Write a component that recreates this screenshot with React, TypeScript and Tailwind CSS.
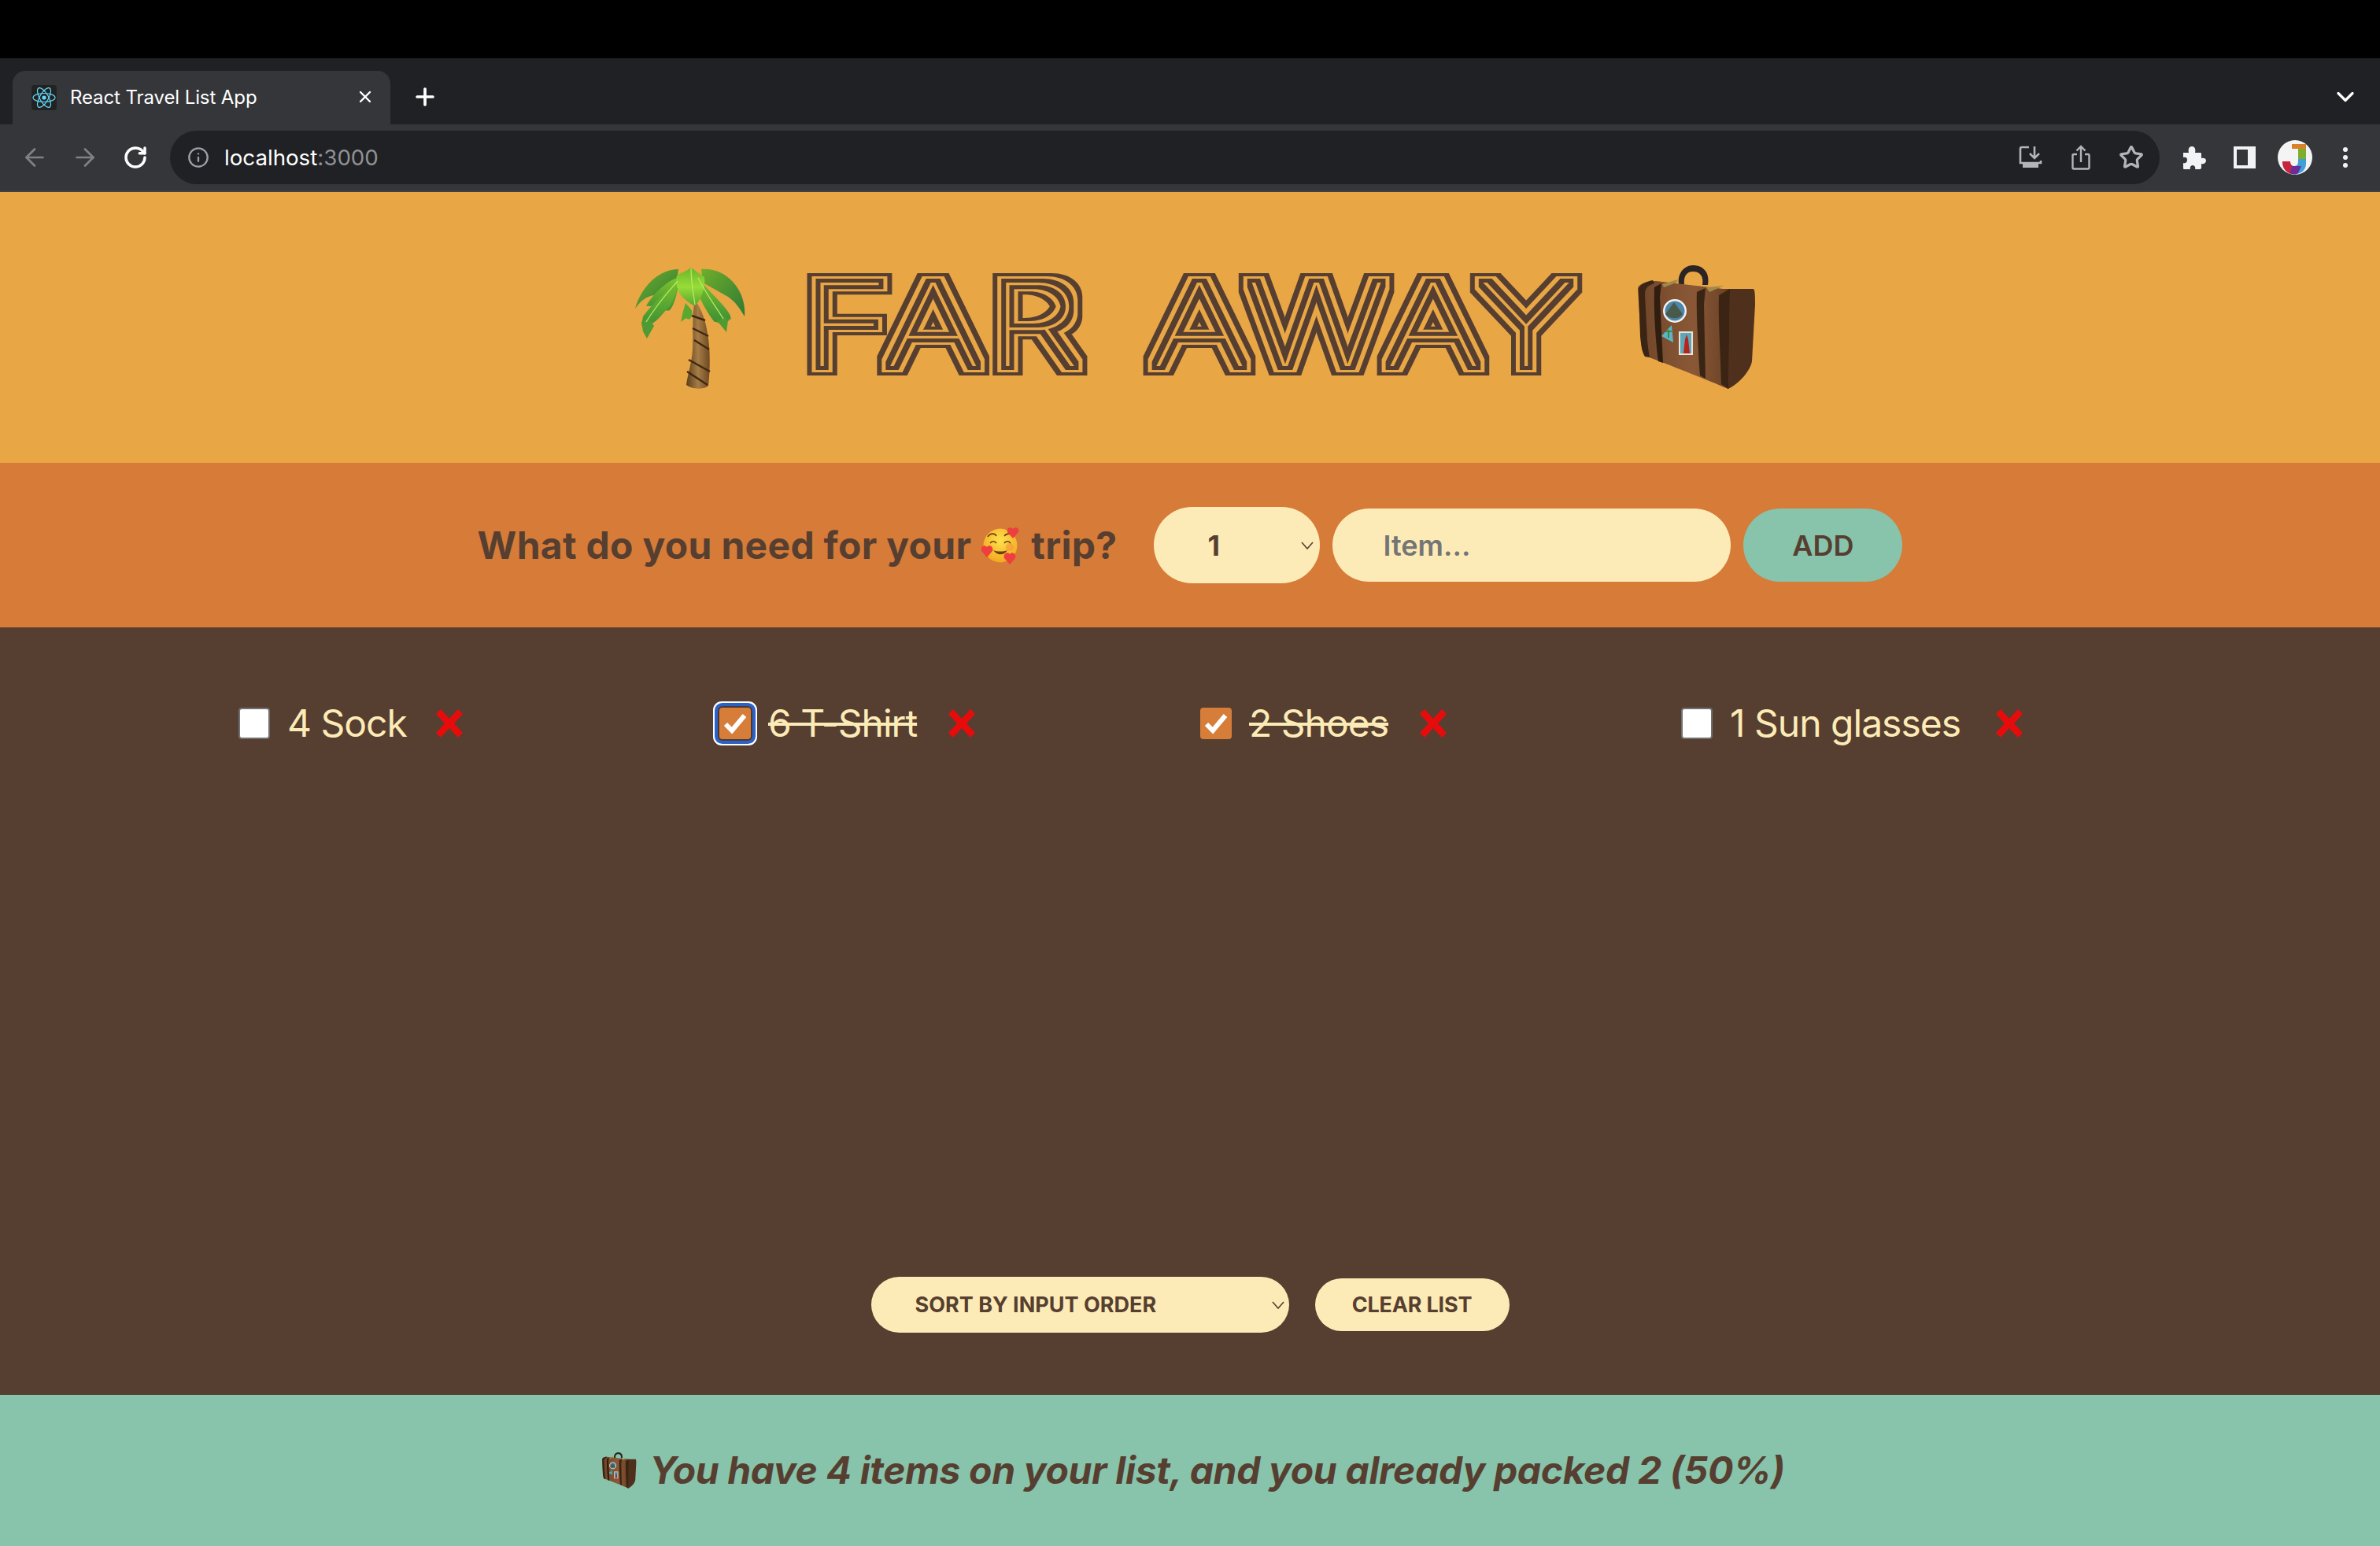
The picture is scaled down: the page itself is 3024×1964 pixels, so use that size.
import { ArrowLeft, ArrowRight, RotateCw, Info, Plus, X, ChevronDown, Star } from "lucide-react";

function Palm({ className }: { className: string }) {
  return (
    <svg viewBox="0 0 141 155" className={className}>
      <defs>
        <linearGradient id="trunk" x1="0" x2="1" y1="0" y2="0">
          <stop offset="0" stopColor="#5c3d1c" />
          <stop offset="0.5" stopColor="#a67c46" />
          <stop offset="1" stopColor="#6d4a22" />
        </linearGradient>
        <linearGradient id="leafDark" x1="0" x2="1" y1="0" y2="1">
          <stop offset="0" stopColor="#6fae2c" />
          <stop offset="1" stopColor="#2f7a35" />
        </linearGradient>
        <linearGradient id="leafMid" x1="0" x2="0" y1="0" y2="1">
          <stop offset="0" stopColor="#7cc42c" />
          <stop offset="1" stopColor="#3f8f35" />
        </linearGradient>
        <linearGradient id="leafLight" x1="0" x2="0" y1="0" y2="1">
          <stop offset="0" stopColor="#6db52a" />
          <stop offset="0.5" stopColor="#97dc38" />
          <stop offset="1" stopColor="#58a52f" />
        </linearGradient>
      </defs>
      <path d="M76 42C72 60 74 90 73 105C72 122 66 140 65 150C72 156 88 156 93 151C95 135 96 105 92 85C90 70 85 55 76 42Z" fill="url(#trunk)" />
      <path d="M72 62L89 68M73 78L93 88M75 93L94 105M68 118L95 133M66 133L92 150" stroke="#3f2810" strokeWidth="2.4" fill="none" />
      <path d="M55 3C30 3 8 25 0 53C8 42 14 38 24 36L52 22Z" fill="url(#leafDark)" />
      <path d="M84 3C116 0 142 30 139 63C133 53 128 45 118 38L86 20Z" fill="url(#leafDark)" />
      <path d="M50 15C36 22 20 38 14 50C26 48 38 58 44 55C52 46 54 28 56 16Z" fill="url(#leafMid)" />
      <path d="M54 16C42 30 22 46 10 63C8 72 9 80 8 70C22 80 30 64 44 50C50 40 53 28 54 16Z" fill="url(#leafMid)" />
      <path d="M8 70L16 63L24 75L15 91L10 82Z" fill="#4e9a33" />
      <path d="M58 70C60 60 62 52 64 46L72 55C74 62 70 70 65 65Z" fill="#5ba831" />
      <path d="M80 14C92 30 116 50 121 62C122 68 122 68 120 66C118 72 112 70 105 70L101 70C94 62 82 42 78 28Z" fill="url(#leafMid)" />
      <path d="M103 70L114 62L118 68L116 83L107 72Z" fill="#4e9a33" />
      <path d="M71 1C62 8 52 8 52 15C52 30 58 40 76 50C84 42 90 24 88 13C82 8 76 5 71 1Z" fill="url(#leafLight)" />
      <path d="M71 2C71 18 74 34 76 48M54 18C44 30 30 44 14 70M80 14C90 34 102 50 112 66" stroke="#b8ec6a" strokeWidth="1.2" fill="none" />
    </svg>
  );
}

function Luggage({ className }: { className: string }) {
  return (
    <svg viewBox="0 0 150 158" className={className}>
      <defs>
        <linearGradient id="lugFront" x1="0" x2="1" y1="0" y2="0">
          <stop offset="0" stopColor="#6f4529" />
          <stop offset="0.6" stopColor="#8a5836" />
          <stop offset="1" stopColor="#6a4126" />
        </linearGradient>
      </defs>
      <path d="M53 24C51 8 62 0 71 0C83 0 93 8 90 25L83 25C85 14 80 8 71 8C63 8 59 14 60 24Z" fill="#2c2423" />
      <path d="M101 30L118 30L148 30C150 32 150 40 150 50L146 122C144 134 130 150 116 157C108 152 103 150 101 148Z" fill="#4f301d" />
      <path d="M1 30C1 24 12 20 24 20L118 31L116 157C90 146 50 130 18 118C8 114 6 110 5 95Z" fill="url(#lugFront)" />
      <path d="M2 32C2 25 10 21 20 19L22 23C12 26 10 30 10 38L13 95C14 105 15 112 16 117L10 116C6 110 5 100 4 90Z" fill="#3a2413" />
      <path d="M22 28L31 23L29 40L33 124L27 122C24 100 21 60 22 28Z" fill="#2f1d10" />
      <path d="M76 34L87 29L85 50L87 144L80 140C78 110 75 60 76 34Z" fill="#3a2414" />
      <path d="M104 38L118 30L116 157L107 151C106 110 103 70 104 38Z" fill="#3b2413" />
      <path d="M32 24L52 18L50 22L34 28ZM88 28L110 26L92 34Z" fill="#a08a4a" />
      <circle cx="48" cy="58" r="15" fill="#f2f2f2" />
      <circle cx="48" cy="58" r="12.5" fill="#4c86a8" />
      <path d="M36 62L47 47L58 62C54 69 42 69 36 62Z" fill="#4a5a4a" />
      <path d="M44 76L31 90L46 98Z" fill="#5bb5c8" />
      <path d="M40 82L40 92M36 84L44 84" stroke="#3d8a3a" strokeWidth="2" fill="none" />
      <rect x="53" y="84" width="18" height="30" fill="#e8e4d8" />
      <rect x="55" y="86" width="14" height="26" fill="#5fa6b8" />
      <path d="M59 112L61 94L63 88L65 94L67 112Z" fill="#b5231c" />
    </svg>
  );
}

function FaceHearts({ className }: { className: string }) {
  return (
    <svg viewBox="0 0 50 48" className={className}>
      <defs>
        <radialGradient id="face" cx="0.5" cy="0.35" r="0.7">
          <stop offset="0" stopColor="#ffe14d" />
          <stop offset="1" stopColor="#f2a31b" />
        </radialGradient>
      </defs>
      <circle cx="24" cy="24" r="21.5" fill="url(#face)" />
      <circle cx="36" cy="26" r="5" fill="#f58a3c" opacity="0.5" />
      <path d="M8 13C11 8 17 8 19 12M29 12C32 8 38 8 40 13M11 21C13 18 17 18 19 21M29 21C31 18 35 18 37 21" stroke="#6b3f12" strokeWidth="1.6" fill="none" />
      <path d="M15 30C20 37 29 37 33 30C28 32 20 32 15 30Z" fill="#6b3f12" />
      <path d="M40 15L33 7C31 2 37 -1 40 3C43 -1 49 2 47 7Z" fill="#ee3e3e" />
      <path d="M7 39L0 31C-2 26 4 22 7 26C10 22 16 26 14 31Z" fill="#ee3e3e" />
      <path d="M36 48L29 40C27 35 33 31 36 35C39 31 45 35 43 40Z" fill="#ee3e3e" />
    </svg>
  );
}

function Cross() {
  return (
    <svg viewBox="0 0 36 36" className="w-[36px] h-[36px] shrink-0">
      <path d="M7 0L18 12L29 0L35 6L24 18L35 30L29 36L18 24L7 36L1 30L12 18L1 6Z" fill="#e80b0b" />
    </svg>
  );
}

function Item({ text, checked, focused, w }: { text: string; checked?: boolean; focused?: boolean; w: string }) {
  return (
    <li className="flex items-center">
      <span className="relative w-[40px] h-[40px] shrink-0">
        <input
          type="checkbox"
          readOnly
          checked={!!checked}
          className={
            checked
              ? focused
                ? "block appearance-none w-[40px] h-[40px] rounded-[4px] bg-[#d67d3a] shadow-[0_0_0_2px_#4d3a2f,0_0_0_6px_#2a62c9,0_0_0_8px_#ffffff]"
                : "block appearance-none w-[40px] h-[40px] rounded-[4px] bg-[#d67d3a]"
              : "block appearance-none w-[40px] h-[40px] rounded-[4px] bg-white border-2 border-[#6f6f6f]"
          }
        />
        {checked && (
          <svg viewBox="0 0 40 40" className="absolute inset-0 w-[40px] h-[40px]">
            <path d="M8 21L16 29L32 10" stroke="#ffffff" strokeWidth="6" fill="none" />
          </svg>
        )}
      </span>
      <span
        className={
          (checked ? "line-through " : "") +
          "ml-[22px] mr-[40px] text-[48px] leading-[60px] font-normal tracking-[-1px] text-[#fdebb7] whitespace-nowrap " +
          w
        }
      >
        {text}
      </span>
      <Cross />
    </li>
  );
}

function Chrome() {
  return (
    <div className="shrink-0">
      <div className="h-[74px] bg-black" />
      <div className="h-[84px] bg-[#202124] relative flex items-end pl-[16px]">
        <div className="w-[480px] h-[68px] bg-[#35363a] rounded-t-[16px] flex items-center pl-[24px] text-white relative">
          <svg viewBox="0 0 32 32" className="w-[32px] h-[32px] rounded-[4px] bg-[#222]">
            <g stroke="#61dafb" strokeWidth="1.2" fill="none">
              <ellipse cx="16" cy="16" rx="14" ry="5.5" />
              <ellipse cx="16" cy="16" rx="14" ry="5.5" transform="rotate(60 16 16)" />
              <ellipse cx="16" cy="16" rx="14" ry="5.5" transform="rotate(120 16 16)" />
            </g>
            <circle cx="16" cy="16" r="2.6" fill="#61dafb" />
          </svg>
          <span className="ml-[17px] text-[24px] leading-[30px] tracking-[-0.1px]">React Travel List App</span>
          <X className="absolute left-[436px] top-[21px] w-[24px] h-[24px]" strokeWidth={2.4} />
        </div>
        <Plus className="absolute left-[523px] top-[32px] w-[34px] h-[34px] text-white" strokeWidth={2.6} />
        <ChevronDown className="absolute left-[2962px] top-[31px] w-[36px] h-[36px] text-white" strokeWidth={2.2} />
      </div>
      <div className="h-[86px] bg-[#35363a] border-b-2 border-[#3f4044] flex items-center">
        <ArrowLeft className="ml-[26px] w-[36px] h-[36px] text-[#808184]" strokeWidth={1.8} />
        <ArrowRight className="ml-[28px] w-[36px] h-[36px] text-[#808184]" strokeWidth={1.8} />
        <RotateCw className="ml-[30px] w-[32px] h-[32px] text-white" strokeWidth={2.6} />
        <div className="ml-[28px] w-[2528px] h-[68px] rounded-full bg-[#202124] flex items-center pl-[22px] pr-[20px]">
          <Info className="w-[28px] h-[28px] text-[#9aa0a6]" strokeWidth={2} />
          <span className="ml-[19px] text-[27.7px] leading-[34px] text-white">
            localhost<span className="text-[#8f9194]">:3000</span>
          </span>
          <div className="ml-auto flex items-center gap-[32px] text-[#b4b5b7]">
            <svg viewBox="0 0 32 32" className="w-[32px] h-[32px]" fill="none" stroke="currentColor" strokeWidth="2.6">
              <path d="M14 3H5a2 2 0 0 0-2 2v18h26v-3" />
              <path d="M21 2v14M15 11l6 6 6-6" />
              <path d="M6 24h20v5H6z" fill="currentColor" stroke="none" />
            </svg>
            <svg viewBox="0 0 32 32" className="w-[32px] h-[32px]" fill="none" stroke="currentColor" strokeWidth="2.4">
              <path d="M11 12H7a1.5 1.5 0 0 0-1.5 1.5V29a1.5 1.5 0 0 0 1.5 1.5h18a1.5 1.5 0 0 0 1.5-1.5V13.5A1.5 1.5 0 0 0 25 12h-4" />
              <path d="M16 22V2M10.5 7.5L16 2l5.5 5.5" />
            </svg>
            <Star className="w-[32px] h-[32px]" strokeWidth={2.4} />
          </div>
        </div>
        <svg viewBox="0 0 32 32" className="ml-[28px] w-[32px] h-[32px] text-[#f1f3f4]" fill="currentColor">
          <path d="M2 10h7C8 6 9 2 13 2s5 4 4 8h7c1 0 1 1 1 2v5c3-1 6 0 6 3s-3 5-6 4v5c0 1-1 2-2 2h-6c1-3-1-5-3-5s-4 2-3 5H3c-1 0-1-1-1-2v-6c3 1 5-1 5-4s-2-4-5-3z" />
        </svg>
        <div className="ml-[34px] w-[28px] h-[28px] bg-[#f1f3f4] flex items-center justify-start pl-[4px]">
          <div className="w-[14px] h-[20px] bg-[#35363a]" />
        </div>
        <svg viewBox="0 0 44 44" className="ml-[28px] w-[44px] h-[44px]">
          <circle cx="22" cy="22" r="22" fill="#f4f4f4" />
          <path d="M18 5H36V30C36 39 28 44 20 43C11 42 6 36 6 27H16C16 31 18 33 21 33C25 33 26 30 26 27V11H18Z" fill="#3f9fd8" />
          <path d="M18 5H36V14L26 11H18Z" fill="#d9822b" />
          <path d="M26 11H36V24H26Z" fill="#7fae2c" />
          <path d="M6 27H16C16 31 18 33 21 33L18 43C11 42 6 36 6 27Z" fill="#c8243c" />
          <path d="M18 33H30L26 42C23 44 20 44 16 42Z" fill="#6a2d9a" />
        </svg>
        <div className="ml-[39px] flex flex-col gap-[4px]">
          <span className="w-[6px] h-[6px] rounded-full bg-[#f1f3f4]" />
          <span className="w-[6px] h-[6px] rounded-full bg-[#f1f3f4]" />
          <span className="w-[6px] h-[6px] rounded-full bg-[#f1f3f4]" />
        </div>
      </div>
    </div>
  );
}

export default function App() {
  return (
    <div className="w-[3024px] h-[1964px] flex flex-col overflow-hidden bg-[#563f30] font-['Inter','Liberation_Sans',sans-serif] text-[#563f30]">
      <svg className="absolute w-0 h-0">
        <filter id="mono" x="-5%" y="-30%" width="110%" height="160%" colorInterpolationFilters="sRGB">
          <feMorphology in="SourceAlpha" operator="dilate" radius="4.6 4.5" result="d1" />
          <feMorphology in="SourceAlpha" operator="dilate" radius="8.5 8" result="d2" />
          <feMorphology in="SourceAlpha" operator="dilate" radius="13.1 12" result="d3" />
          <feComposite in="d1" in2="SourceAlpha" operator="out" result="r1" />
          <feComposite in="d3" in2="d2" operator="out" result="r2" />
          <feMerge result="m">
            <feMergeNode in="r1" />
            <feMergeNode in="r2" />
          </feMerge>
          <feFlood floodColor="#563f30" result="c" />
          <feComposite in="c" in2="m" operator="in" />
        </filter>
      </svg>
      <Chrome />
      <header className="h-[344px] shrink-0 bg-[#e9a645] flex items-center pl-[807px]">
        <Palm className="w-[141px] h-[155px] shrink-0" />
        <h1 className="ml-[73px] mb-[8px] w-[957px] origin-left scale-x-[1.3] text-[146px] leading-[180px] font-thin whitespace-nowrap text-[#563f30] tracking-[8px] [word-spacing:12px] [filter:url(#mono)]">
          FAR AWAY
        </h1>
        <Luggage className="ml-[102px] w-[150px] h-[158px] shrink-0" />
      </header>
      <form className="h-[209px] shrink-0 bg-[#d67b38] flex items-center justify-center">
        <h3 className="text-[48px] leading-[60px] font-bold tracking-[0.3px] flex items-center whitespace-nowrap mr-[47px]">
          What do you need for your
          <FaceHearts className="w-[50px] h-[48px] mx-[13px]" />
          trip?
        </h3>
        <span className="relative">
          <select className="block appearance-none w-[211px] h-[97px] rounded-full bg-[#fdebb7] pl-[68px] text-[36px] font-bold text-[#563f30] outline-none">
            <option>1</option>
          </select>
          <svg viewBox="0 0 16 10" className="absolute left-[187px] top-[44px] w-[16px] h-[10px]" fill="none" stroke="#563f30" strokeWidth="1.6">
            <path d="M1 1l7 8 7-8" />
          </svg>
        </span>
        <input
          placeholder="Item..."
          className="ml-[16px] w-[506px] h-[93px] rounded-full bg-[#fdebb7] pl-[64px] text-[36px] font-semibold outline-none placeholder:text-[#757575]"
        />
        <button type="button" className="ml-[16px] w-[202px] h-[93px] rounded-full bg-[#88c3ab] text-[36px] font-semibold text-[#563f30]">
          ADD
        </button>
      </form>
      <main className="flex-1 flex flex-col bg-[#563f30]">
        <ul className="grid grid-cols-[611px_611px_611px_611px] pl-[303px] pt-[92px]">
          <Item text="4 Sock" w="w-[148px]" />
          <Item text="6 T-Shirt" checked focused w="w-[188px]" />
          <Item text="2 Shoes" checked w="w-[176px]" />
          <Item text="1 Sun glasses" w="w-[297px]" />
        </ul>
        <div className="mt-auto mb-[79px] flex items-center justify-center">
          <span className="relative">
            <select className="block appearance-none w-[531px] h-[71px] pt-[1px] rounded-full bg-[#fdebb7] pl-[56px] text-[27px] font-bold uppercase text-[#563f30] outline-none">
              <option>Sort by input order</option>
            </select>
            <svg viewBox="0 0 16 10" className="absolute left-[509px] top-[31px] w-[16px] h-[10px]" fill="none" stroke="#563f30" strokeWidth="1.6">
              <path d="M1 1l7 8 7-8" />
            </svg>
          </span>
          <button type="button" className="ml-[33px] w-[247px] h-[67px] pt-[1px] rounded-full bg-[#fdebb7] text-[27px] font-bold tracking-[-0.2px] uppercase text-[#563f30]">
            Clear list
          </button>
        </div>
      </main>
      <footer className="h-[192px] shrink-0 bg-[#88c3ab] flex items-center justify-center pl-[6px] text-[48px] leading-[60px] font-bold italic tracking-[-0.35px] whitespace-nowrap">
        <Luggage className="w-[49px] h-[46px] mr-[14px]" />
        You have 4 items on your list, and you already packed 2 (50%)
      </footer>
    </div>
  );
}
